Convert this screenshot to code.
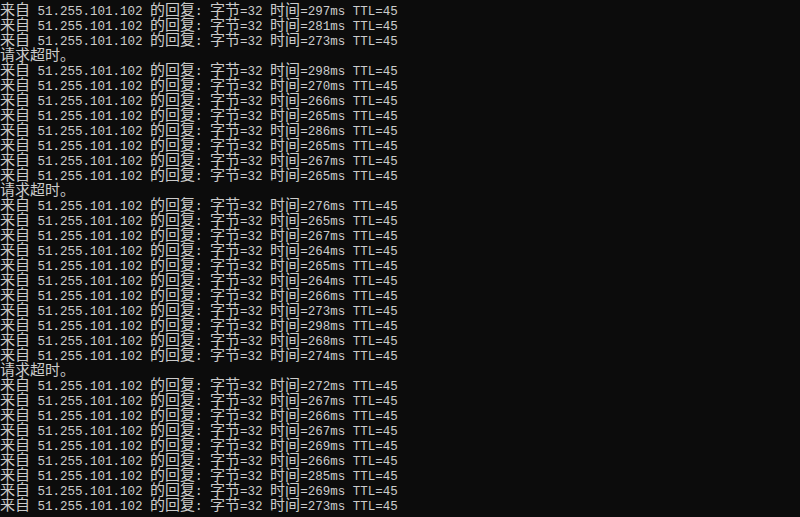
import React from "react";

const reply = (t: string) => `来自 51.255.101.102 的回复: 字节=32 时间=${t}ms TTL=45`;
const T = "请求超时。";

const lines: string[] = [
  reply("297"), reply("281"), reply("273"), T,
  reply("298"), reply("270"), reply("266"), reply("265"), reply("286"), reply("265"), reply("267"), reply("265"), T,
  reply("276"), reply("265"), reply("267"), reply("264"), reply("265"), reply("264"), reply("266"), reply("273"), reply("298"), reply("268"), reply("274"), T,
  reply("272"), reply("267"), reply("266"), reply("267"), reply("269"), reply("266"), reply("285"), reply("269"), reply("273"),
];

function split(s: string) {
  const out: { cjk: boolean; t: string }[] = [];
  for (const ch of s) {
    const cjk = ch.charCodeAt(0) > 0x2e80;
    const last = out[out.length - 1];
    if (last && last.cjk === cjk) last.t += ch;
    else out.push({ cjk, t: ch });
  }
  return out;
}

function Line({ text }: { text: string }) {
  return (
    <div className="h-[15px] leading-[15px] whitespace-pre overflow-visible">
      {split(text).map((seg, i) =>
        seg.cjk ? (
          <span key={i} className="text-[15px] leading-[15px] [font-family:'Noto_Sans_CJK_SC',sans-serif]">
            {seg.t}
          </span>
        ) : (
          <span key={i} className="text-[12.5px] leading-[15px] [font-family:'Liberation_Mono',monospace]">
            {seg.t}
          </span>
        )
      )}
    </div>
  );
}

export default function App() {
  return (
    <div className="w-[800px] h-[517px] overflow-hidden bg-[#0c0c0c] text-[#cccccc] pt-[1px]">
      {lines.map((l, i) => (
        <Line key={i} text={l} />
      ))}
    </div>
  );
}
